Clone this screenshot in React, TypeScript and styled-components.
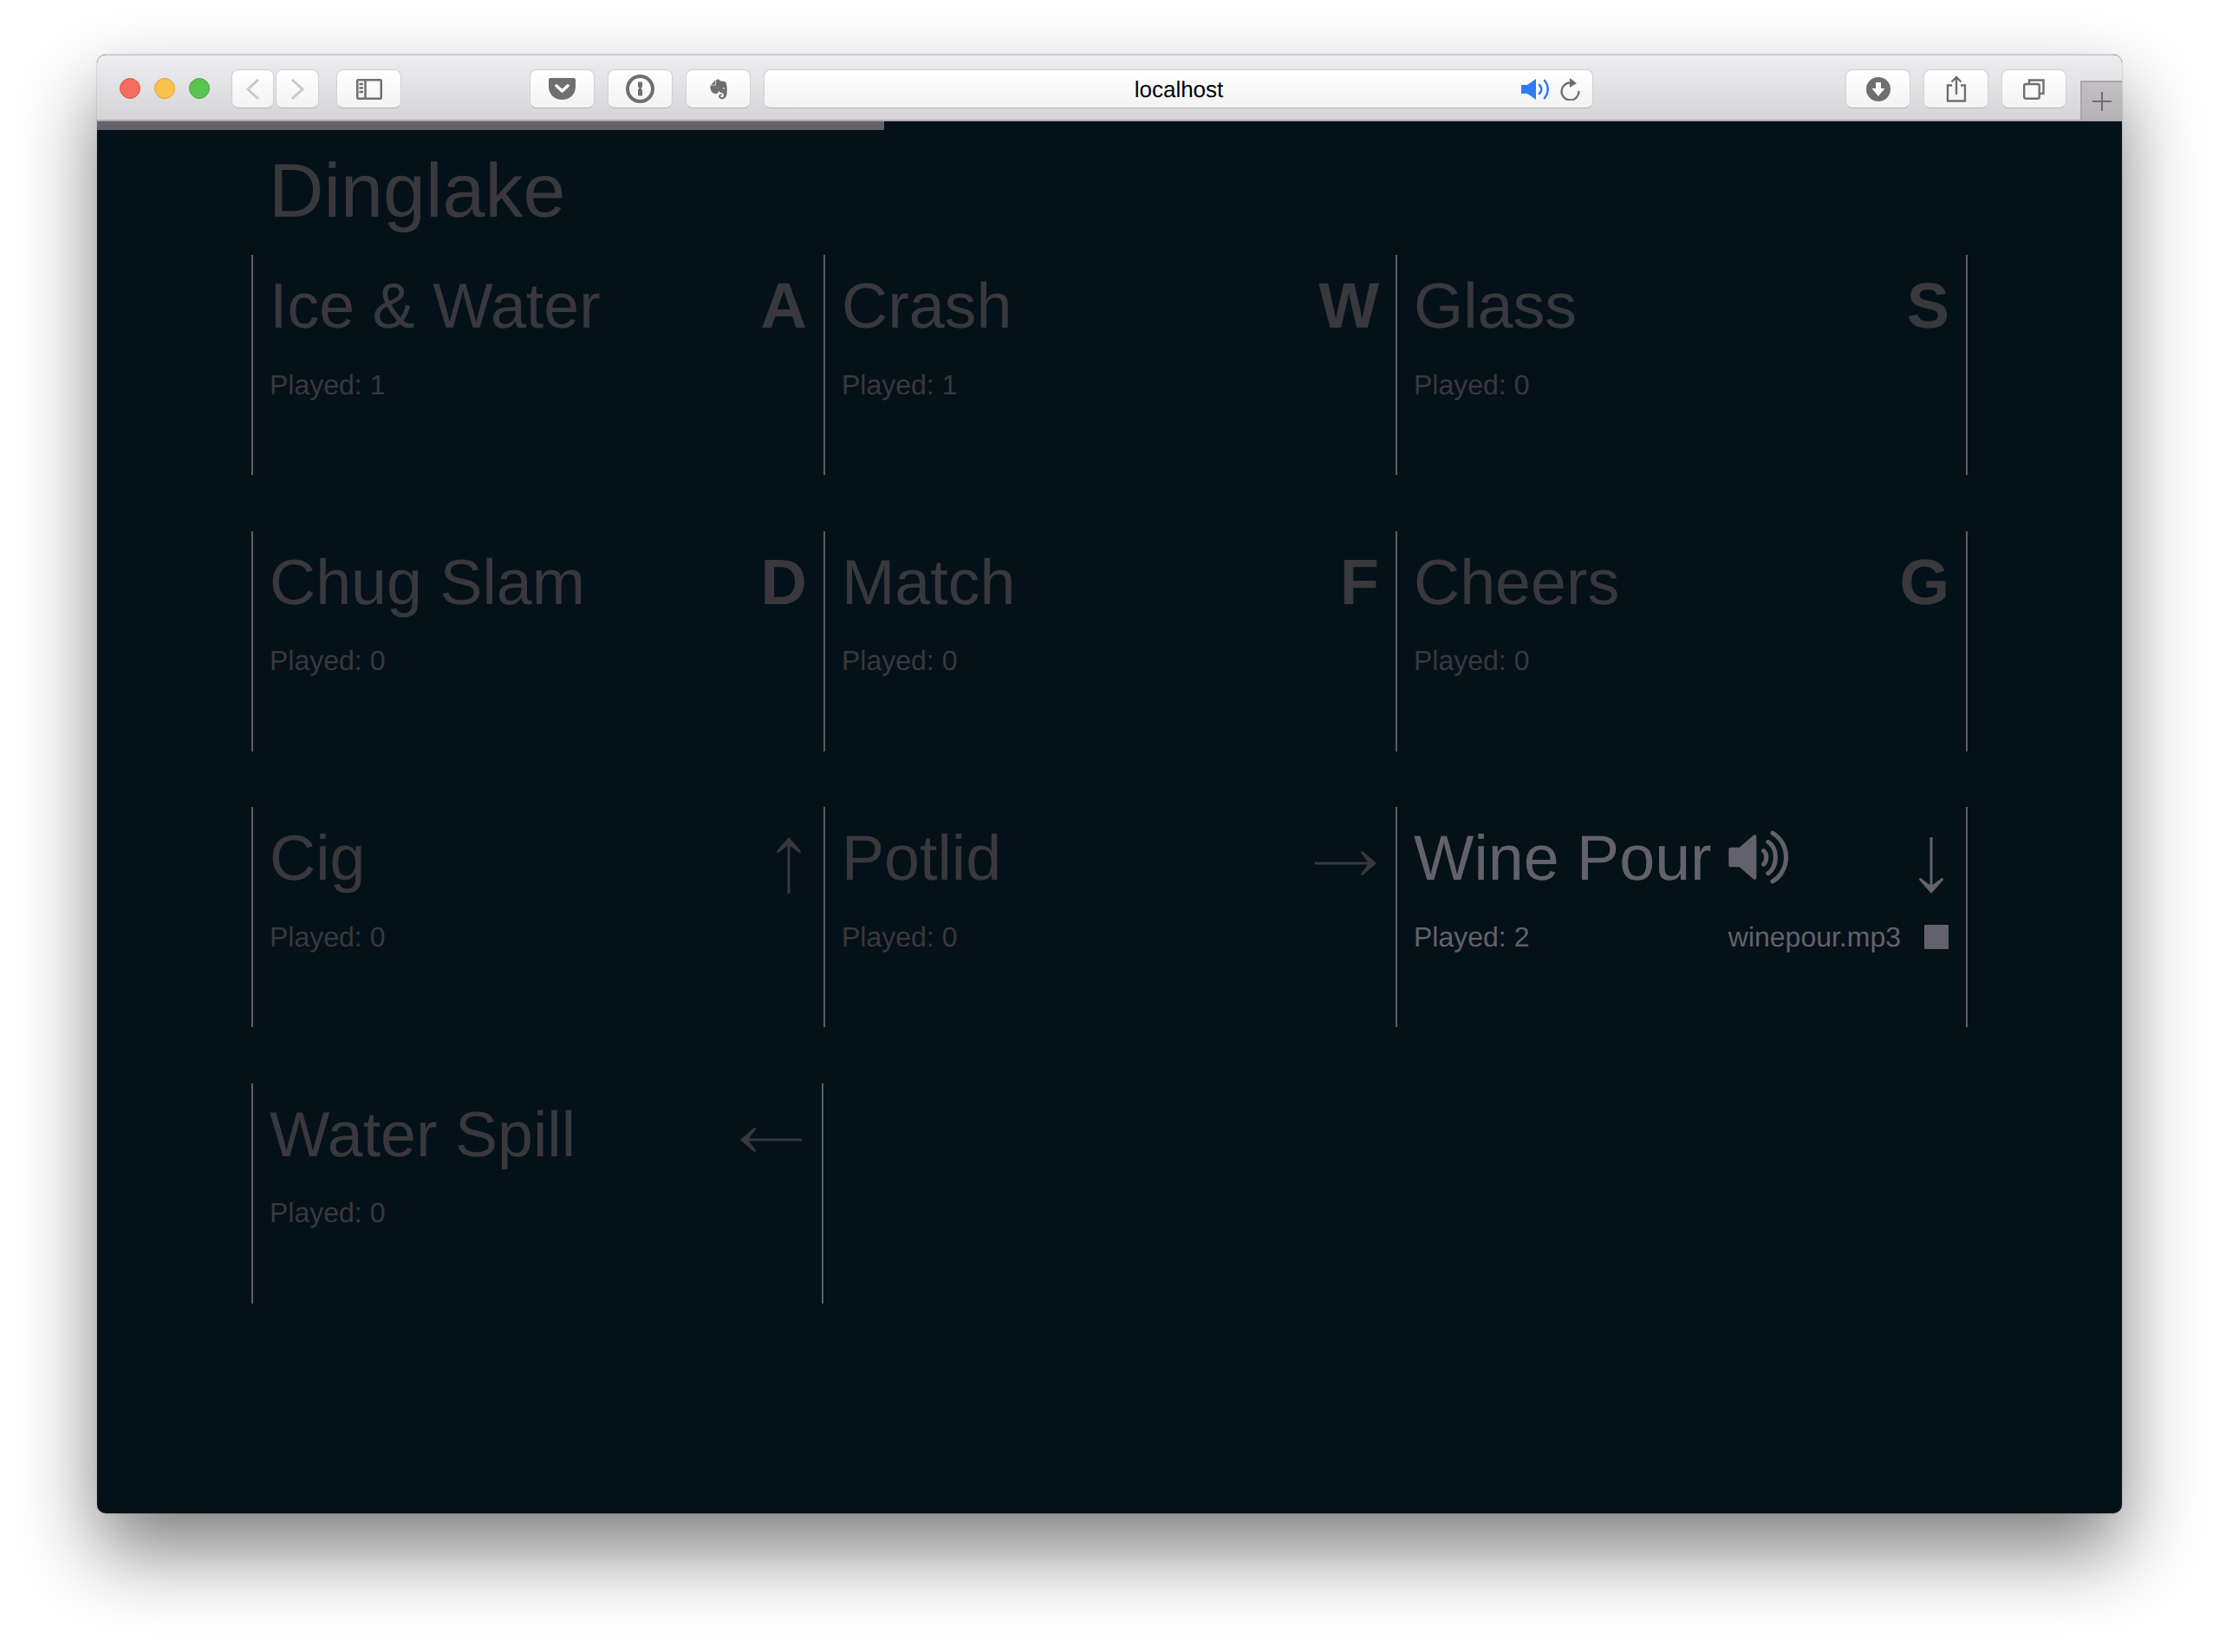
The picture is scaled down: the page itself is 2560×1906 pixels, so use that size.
import styled, { createGlobalStyle } from "styled-components";
import { FaEvernote } from "react-icons/fa";

const cl_active = "#63616c";
const cl_idle = "#39383d";
const cl_splitter = "#5c5c68";
const cl_background = "#051118";
const cl_icon = "#6f6f6f";

const GlobalStyle = createGlobalStyle`
  html, body {
    margin: 0;
    background: #fff;
    overflow: hidden;
  }
  body {
    font-family: "Liberation Sans", Arial, sans-serif;
    text-rendering: geometricPrecision;
  }
`;

const Page = styled.div`
  width: 2560px;
  height: 1906px;
  box-sizing: border-box;
  padding: 63px 112px 0;
`;

const Window = styled.div`
  width: 2336px;
  height: 1683px;
  display: flex;
  flex-direction: column;
  border-radius: 10px;
  overflow: hidden;
  background: ${cl_background};
  box-shadow: 0 44px 90px rgba(0, 0, 0, 0.5), 0 0 2px rgba(0, 0, 0, 0.35);
`;

const Toolbar = styled.div`
  height: 77px;
  flex: none;
  box-sizing: border-box;
  display: flex;
  align-items: flex-start;
  padding: 16px 0 0 26px;
  background: linear-gradient(#eeedef, #d6d4d7);
  border-top: 1px solid #c4c3c5;
  border-bottom: 2px solid #aeacae;
`;

const Lights = styled.div`
  display: flex;
  gap: 16px;
  margin-top: 10px;
`;

const Light = styled.span<{ $fill: string; $edge: string }>`
  width: 24px;
  height: 24px;
  box-sizing: border-box;
  border-radius: 50%;
  background: ${(p) => p.$fill};
  border: 1px solid ${(p) => p.$edge};
`;

const ButtonGroup = styled.div<{ $left: number; $gap: number }>`
  display: flex;
  gap: ${(p) => p.$gap}px;
  margin-left: ${(p) => p.$left}px;
`;

const ToolButton = styled.div<{ $width: number }>`
  width: ${(p) => p.$width}px;
  height: 45px;
  box-sizing: border-box;
  display: flex;
  align-items: center;
  justify-content: center;
  border-radius: 8px;
  background: linear-gradient(#ffffff, #f3f3f3);
  border: 1px solid #d2d0d3;
  border-bottom-color: #b9b7ba;
  color: ${cl_icon};
`;

const AddressBar = styled(ToolButton)`
  display: grid;
  grid-template-columns: 1fr auto 1fr;
  margin-left: 15px;
  padding-right: 14px;
  color: #000;
  font-size: 26px;
`;

const AddressText = styled.span`
  grid-column: 2;
  margin: 2px 0 0 15px;
`;

const AddressIcons = styled.div`
  grid-column: 3;
  display: flex;
  justify-content: flex-end;
  align-items: center;
  gap: 13px;
`;

const RightTools = styled(ButtonGroup)`
  margin-right: 16px;
`;

const NewTab = styled.div`
  width: 48px;
  height: 46px;
  margin-top: 13px;
  box-sizing: border-box;
  display: flex;
  align-items: center;
  justify-content: center;
  background: linear-gradient(#c2c0c2, #b4b2b4);
  border-top: 2px solid #a9a7a9;
  border-left: 2px solid #a9a7a9;
`;

const ProgressTrack = styled.div`
  height: 10px;
  flex: none;
`;

const ProgressFill = styled.div`
  height: 100%;
  background: ${cl_active};
`;

const Content = styled.main`
  padding: 20px 0 0 178px;
`;

const Title = styled.h1`
  margin: 0 0 24px 20px;
  font-size: 88px;
  line-height: 100px;
  font-weight: 400;
  color: ${cl_idle};
`;

const Grid = styled.div`
  display: grid;
  grid-template-columns: repeat(3, 660px);
  grid-auto-rows: 254px;
  row-gap: 64.67px;
`;

const Card = styled.section<{ $active: boolean; $closed: boolean }>`
  box-sizing: border-box;
  padding: 19px 19px 0 19px;
  border-left: 2px solid ${cl_splitter};
  border-right: ${(p) => (p.$closed ? `2px solid ${cl_splitter}` : "0")};
  color: ${(p) => (p.$active ? cl_active : cl_idle)};
`;

const Header = styled.div`
  height: 80px;
  display: flex;
  justify-content: space-between;
  align-items: flex-start;
`;

const NameWrap = styled.div`
  display: flex;
  align-items: flex-start;
  gap: 19px;
`;

const Name = styled.div`
  font-size: 73.6px;
  line-height: 80px;
`;

const KeyLetter = styled.div`
  font-size: 74px;
  line-height: 80px;
  font-weight: 700;
`;

const Footer = styled.div`
  margin-top: 30.5px;
  height: 40px;
  display: flex;
  justify-content: space-between;
  align-items: center;
  font-size: 32px;
  line-height: 40px;
`;

const FileInfo = styled.div`
  display: flex;
  align-items: center;
  gap: 27px;
`;

const StopSquare = styled.span`
  width: 28px;
  height: 28px;
  margin-right: 1px;
  background: ${cl_active};
  border-radius: 1px;
`;

const SpeakerSvg = styled.svg`
  margin-top: 8px;
  flex: none;
`;

const ArrowSvg = styled.svg<{ $top: number; $right: number }>`
  margin-top: ${(p) => p.$top}px;
  margin-right: ${(p) => p.$right}px;
  flex: none;
`;

type ArrowDirection = "up" | "right" | "down" | "left";

const ARROWS: Record<
  ArrowDirection,
  { w: number; h: number; top: number; right: number; d: string }
> = {
  up: {
    w: 28,
    h: 65,
    top: 16,
    right: 7,
    d: "M14 0L28 16L27 18.5L15.5 10V65H12.5V10L1 18.5L0 16Z",
  },
  down: {
    w: 28,
    h: 65,
    top: 16,
    right: 7,
    d: "M14 65L28 49L27 46.5L15.5 55V0H12.5V55L1 46.5L0 49Z",
  },
  right: {
    w: 71,
    h: 28,
    top: 32,
    right: 3,
    d: "M71 14L55 28L52.5 27L61 15.5H0V12.5H61L52.5 1L55 0Z",
  },
  left: {
    w: 71,
    h: 28,
    top: 32,
    right: 4,
    d: "M0 14L16 28L18.5 27L10 15.5H71V12.5H10L18.5 1L16 0Z",
  },
};

type Sound = {
  name: string;
  played: number;
  keyName: string | ArrowDirection;
  file?: string;
};

const SOUNDS: Sound[] = [
  { name: "Ice & Water", played: 1, keyName: "A" },
  { name: "Crash", played: 1, keyName: "W" },
  { name: "Glass", played: 0, keyName: "S" },
  { name: "Chug Slam", played: 0, keyName: "D" },
  { name: "Match", played: 0, keyName: "F" },
  { name: "Cheers", played: 0, keyName: "G" },
  { name: "Cig", played: 0, keyName: "up" },
  { name: "Potlid", played: 0, keyName: "right" },
  { name: "Wine Pour", played: 2, keyName: "down", file: "winepour.mp3" },
  { name: "Water Spill", played: 0, keyName: "left" },
];

const PROGRESS = 908 / 2336;

function Arrow({ direction }: { direction: ArrowDirection }) {
  const a = ARROWS[direction];
  return (
    <ArrowSvg
      $top={a.top}
      $right={a.right}
      width={a.w}
      height={a.h}
      viewBox={`0 0 ${a.w} ${a.h}`}
      fill="currentColor"
    >
      <path d={a.d} />
    </ArrowSvg>
  );
}

function Speaker() {
  return (
    <SpeakerSvg width="72" height="62" viewBox="0 0 69 60" fill="none">
      <path
        d="M2 19H12L27 6C29 4 31 5 31 8V52C31 55 29 56 27 54L12 41H2C1 41 0 40 0 39V21C0 20 1 19 2 19Z"
        fill="currentColor"
      />
      <g stroke="currentColor" strokeWidth="5" strokeLinecap="round">
        <path d="M39 23C43 26 43 34 39 38" />
        <path d="M44 13C55 20 55 40 44 48" />
        <path d="M49 3C69 15 69 45 49 57" />
      </g>
    </SpeakerSvg>
  );
}

function SoundCard({ sound, index }: { sound: Sound; index: number }) {
  const isArrow = sound.keyName in ARROWS;
  const closed = (index + 1) % 3 === 0 || index === SOUNDS.length - 1;
  return (
    <Card $active={!!sound.file} $closed={closed}>
      <Header>
        <NameWrap>
          <Name>{sound.name}</Name>
          {/* Playing indicator */}
          {sound.file && <Speaker />}
        </NameWrap>
        {isArrow ? (
          <Arrow direction={sound.keyName as ArrowDirection} />
        ) : (
          <KeyLetter>{sound.keyName}</KeyLetter>
        )}
      </Header>
      <Footer>
        <span>Played: {sound.played}</span>
        {sound.file && (
          <FileInfo>
            <span>{sound.file}</span>
            <StopSquare />
          </FileInfo>
        )}
      </Footer>
    </Card>
  );
}

function BrowserToolbar() {
  return (
    <Toolbar>
      <Lights>
        <Light $fill="#f26d60" $edge="#d9574b" />
        <Light $fill="#f8c44f" $edge="#dea134" />
        <Light $fill="#5ac453" $edge="#47a83f" />
      </Lights>
      <ButtonGroup $left={25} $gap={2}>
        <ToolButton $width={49}>
          <svg width="16" height="24" viewBox="0 0 16 24" fill="none" stroke="#c9c9c9" strokeWidth="3">
            <path d="M14 1L2 12L14 23" />
          </svg>
        </ToolButton>
        <ToolButton $width={50}>
          <svg width="16" height="24" viewBox="0 0 16 24" fill="none" stroke="#c9c9c9" strokeWidth="3">
            <path d="M2 1L14 12L2 23" />
          </svg>
        </ToolButton>
      </ButtonGroup>
      <ButtonGroup $left={20} $gap={0}>
        <ToolButton $width={75}>
          <svg width="30" height="24" viewBox="0 0 30 24" fill="none" stroke={cl_icon} strokeWidth="2.5">
            <rect x="1.25" y="1.25" width="27.5" height="21.5" rx="1" />
            <path d="M10.5 1V23" />
            <path d="M3.5 6H8M3.5 10.5H8M3.5 15H8" strokeWidth="2.5" />
          </svg>
        </ToolButton>
      </ButtonGroup>
      <ButtonGroup $left={148} $gap={15}>
        <ToolButton $width={75}>
          <svg width="31" height="25" viewBox="0 0 31 25">
            <path d="M2 0H29C30 0 31 1 31 2V10C31 19 24 25 15.5 25C7 25 0 19 0 10V2C0 1 1 0 2 0Z" fill={cl_icon} />
            <path d="M9 9L15.5 15L22 9" fill="none" stroke="#fff" strokeWidth="3.6" strokeLinecap="round" strokeLinejoin="round" />
          </svg>
        </ToolButton>
        <ToolButton $width={75}>
          <svg width="33" height="33" viewBox="0 0 33 33">
            <circle cx="16.5" cy="16.5" r="14.5" fill="none" stroke={cl_icon} strokeWidth="4" />
            <path d="M14 8.5H19V14L17.5 16L19 18V24.5H14V17.5L15.5 16L14 14Z" fill={cl_icon} />
          </svg>
        </ToolButton>
        <ToolButton $width={75}>
          <FaEvernote size={26} />
        </ToolButton>
      </ButtonGroup>
      <AddressBar $width={957}>
        <AddressText>localhost</AddressText>
        <AddressIcons>
          <svg width="32" height="24" viewBox="0 0 32 24" fill="none">
            <path d="M0 7H7L17 0V24L7 17H0Z" fill="#2f7bf6" />
            <path d="M21 7C24 10 24 14 21 17M27 2C32 8 32 16 27 22" stroke="#2f7bf6" strokeWidth="2.6" strokeLinecap="round" />
          </svg>
          <svg width="23" height="26" viewBox="0 0 23 26" fill="none">
            <path d="M11 5.5A10 10 0 1 0 21.5 15" stroke={cl_icon} strokeWidth="2.4" />
            <path d="M11 0L19 6L11 11Z" fill={cl_icon} />
          </svg>
        </AddressIcons>
      </AddressBar>
      <RightTools $left={291} $gap={15}>
        <ToolButton $width={75}>
          <svg width="28" height="28" viewBox="0 0 28 28">
            <circle cx="14" cy="14" r="14" fill={cl_icon} />
            <path d="M11 6H17V13H21.5L14 22L6.5 13H11Z" fill="#fff" />
          </svg>
        </ToolButton>
        <ToolButton $width={75}>
          <svg width="24" height="31" viewBox="0 0 24 31" fill="none" stroke={cl_icon} strokeWidth="2.4">
            <path d="M7 11.5H2V29.5H22V11.5H17" />
            <path d="M12 22V2M6.5 7.5L12 2L17.5 7.5" />
          </svg>
        </ToolButton>
        <ToolButton $width={75}>
          <svg width="25" height="24" viewBox="0 0 25 24" fill="none" stroke={cl_icon} strokeWidth="2.4">
            <path d="M7 5V1.5H23.5V17H19" />
            <rect x="1.2" y="6" width="17.5" height="16.8" rx="2" />
          </svg>
        </ToolButton>
      </RightTools>
      <NewTab>
        <svg width="22" height="22" viewBox="0 0 22 22" stroke="#6d6c6e" strokeWidth="2">
          <path d="M11 0V22M0 11H22" />
        </svg>
      </NewTab>
    </Toolbar>
  );
}

export default function App() {
  return (
    <>
      <GlobalStyle />
      <Page>
        <Window>
          <BrowserToolbar />
          <ProgressTrack>
            <ProgressFill style={{ width: `${PROGRESS * 100}%` }} />
          </ProgressTrack>
          <Content>
            <Title>Dinglake</Title>
            <Grid>
              {SOUNDS.map((sound, index) => (
                <SoundCard key={sound.name} sound={sound} index={index} />
              ))}
            </Grid>
          </Content>
        </Window>
      </Page>
    </>
  );
}
